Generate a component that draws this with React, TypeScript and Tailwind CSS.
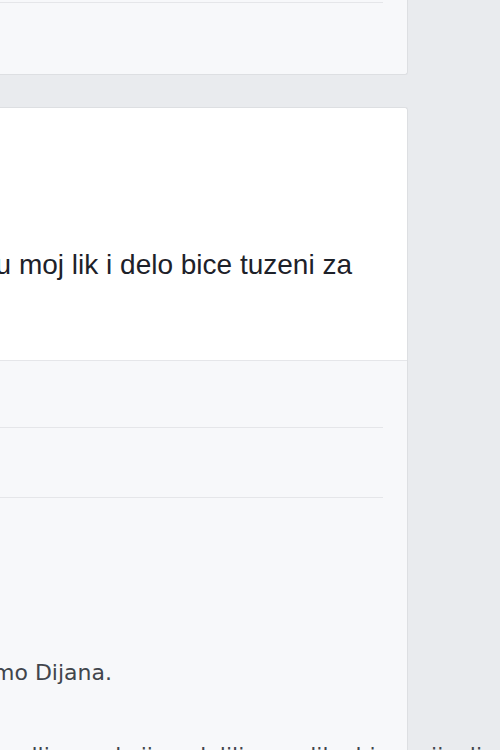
export default function App() {
  return (
    <div className="h-[750px] w-[500px] overflow-hidden bg-[#e9ebee] font-['Liberation_Sans',Arial,sans-serif] text-[#1d2129]">
      {/* previous post, bottom of its comments area */}
      <div className="h-[75px] w-[408px] rounded-br-[3px] border-r border-b border-[#dddfe2] bg-[#f7f8fa] pt-[2px] pr-[24px]">
        <div className="border-t border-[#e5e6e9]" />
      </div>

      {/* current post */}
      <div className="mt-[32px] w-[408px] rounded-tr-[3px] border-t border-r border-[#dddfe2] bg-white">
        <div className="h-[252px] pt-[140px] pr-[55px]">
          <div className="flex justify-end">
            <p className="shrink-0 whitespace-nowrap text-[28px] leading-[34px] text-[#1d2129]">
              Svi koji diraju u moj lik i delo bice tuzeni za
            </p>
          </div>
        </div>

        <div className="border-t border-[#e5e6e9] bg-[#f7f8fa] pr-[24px]">
          <div className="h-[66px]" />
          <div className="h-[70px] border-t border-[#e5e6e9]" />
          <div className="border-t border-[#e5e6e9] pt-[161px] font-['DejaVu_Sans',sans-serif]">
            <div className="flex w-[112px] justify-end">
              <p className="shrink-0 whitespace-nowrap text-[22px] leading-[28px] text-[#41454c]">
                Hvala ti, pozdrav od mene i od mamo Dijana.
              </p>
            </div>
            <p className="mt-[55px] whitespace-nowrap pl-[18px] text-[22px] leading-[28px] text-[#41454c]">
              ollie sve koji su delili ovu sliku bice prijavljeni
            </p>
          </div>
        </div>
      </div>
    </div>
  );
}
